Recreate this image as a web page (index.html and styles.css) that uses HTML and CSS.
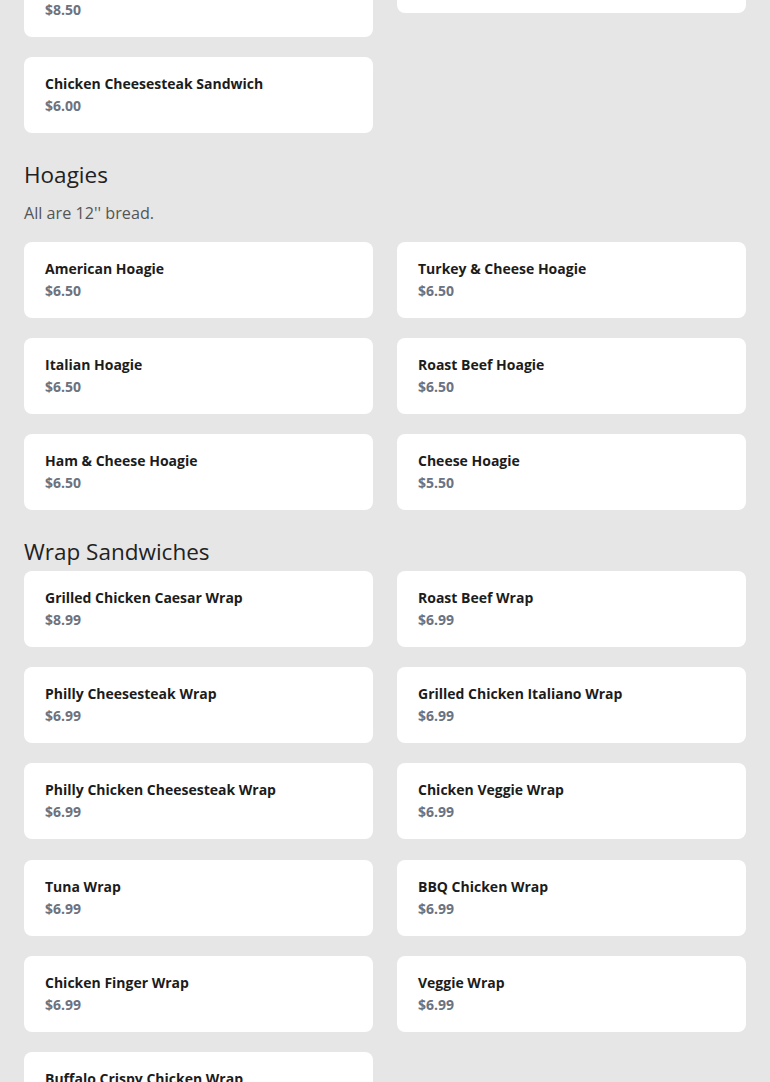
FILE: index.html
```html
<!DOCTYPE html>
<html lang="en">
<head>
<meta charset="utf-8">
<title>Menu</title>
<link rel="stylesheet" href="styles.css">
</head>
<body>
<main class="menu">
  <section class="section">
    <div class="grid">
      <div class="card"><div class="name">Cheesesteak Sandwich with Fried Onions, Peppers and Mushrooms</div><div class="price">$8.50</div></div>
      <div class="card card--short"><div class="name">Cheesesteak Sandwich</div><div class="price">$7.00</div></div>
      <div class="card"><div class="name">Chicken Cheesesteak Sandwich</div><div class="price">$6.00</div></div>
    </div>
  </section>

  <section class="section">
    <h2 class="title">Hoagies</h2>
    <p class="desc">All are 12'' bread.</p>
    <div class="grid">
      <div class="card"><div class="name">American Hoagie</div><div class="price">$6.50</div></div>
      <div class="card"><div class="name">Turkey &amp; Cheese Hoagie</div><div class="price">$6.50</div></div>
      <div class="card"><div class="name">Italian Hoagie</div><div class="price">$6.50</div></div>
      <div class="card"><div class="name">Roast Beef Hoagie</div><div class="price">$6.50</div></div>
      <div class="card"><div class="name">Ham &amp; Cheese Hoagie</div><div class="price">$6.50</div></div>
      <div class="card"><div class="name">Cheese Hoagie</div><div class="price">$5.50</div></div>
    </div>
  </section>

  <section class="section">
    <h2 class="title">Wrap Sandwiches</h2>
    <div class="grid grid--wrap">
      <div class="card"><div class="name">Grilled Chicken Caesar Wrap</div><div class="price">$8.99</div></div>
      <div class="card"><div class="name">Roast Beef Wrap</div><div class="price">$6.99</div></div>
      <div class="card"><div class="name">Philly Cheesesteak Wrap</div><div class="price">$6.99</div></div>
      <div class="card"><div class="name">Grilled Chicken Italiano Wrap</div><div class="price">$6.99</div></div>
      <div class="card"><div class="name">Philly Chicken Cheesesteak Wrap</div><div class="price">$6.99</div></div>
      <div class="card"><div class="name">Chicken Veggie Wrap</div><div class="price">$6.99</div></div>
      <div class="card"><div class="name">Tuna Wrap</div><div class="price">$6.99</div></div>
      <div class="card"><div class="name">BBQ Chicken Wrap</div><div class="price">$6.99</div></div>
      <div class="card"><div class="name">Chicken Finger Wrap</div><div class="price">$6.99</div></div>
      <div class="card"><div class="name">Veggie Wrap</div><div class="price">$6.99</div></div>
      <div class="card"><div class="name">Buffalo Crispy Chicken Wrap</div><div class="price">$6.99</div></div>
    </div>
  </section>
</main>
</body>
</html>
```

FILE: styles.css
```css
* { box-sizing: border-box; }
html, body { margin: 0; padding: 0; }
body {
  background: #e6e6e6;
  font-family: "Open Sans", "Liberation Sans", sans-serif;
  color: #1f1f1f;
}
.menu {
  padding: 0 24px 40px;
  margin-top: -61px;
}
.title {
  margin: 26px 0 3px;
  font-size: 22.5px;
  line-height: 32px;
  font-weight: 400;
  color: #222;
}
.desc {
  margin: 10px 0 17px;
  font-size: 16.2px;
  line-height: 24px;
  color: #555;
}
.grid {
  display: grid;
  grid-template-columns: 1fr 1fr;
  column-gap: 24px;
  row-gap: 20px;
  align-items: start;
}
.grid--wrap {
  row-gap: 20.2px;
}
.card {
  background: #fff;
  border-radius: 8px;
  padding: 16px 21px 16px;
}
.card--short {
  padding-bottom: 14px;
}
.name {
  font-size: 14px;
  line-height: 22px;
  font-weight: 700;
  color: #1c1c1c;
}
.price {
  font-size: 14px;
  line-height: 22px;
  font-weight: 700;
  color: #6b7280;
}
```
